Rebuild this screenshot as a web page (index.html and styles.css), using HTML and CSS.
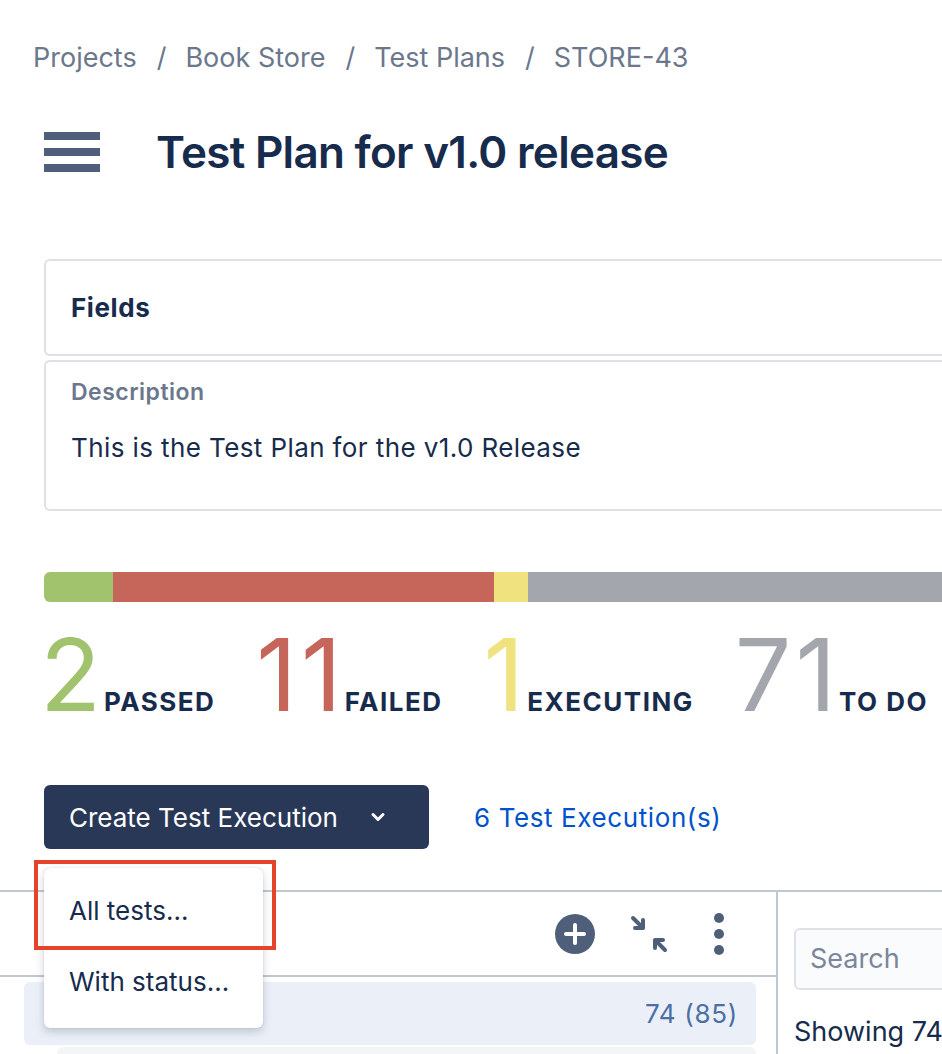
FILE: index.html
```html
<!DOCTYPE html>
<html>
<head>
    <title>Test Plan for v1.0 release</title>
    <link rel="stylesheet" href="styles.css">
</head>
<body>
    <div id="page">
        <div id="breadcrumbs">
            <a href="#">Projects</a><span class="sep">/</span>
            <a href="#">Book Store</a><span class="sep">/</span>
            <a href="#">Test Plans</a><span class="sep">/</span>
            <a href="#">STORE-43</a>
        </div>

        <div id="heading">
            <div class="menu-icon"><span></span><span></span><span></span></div>
            <h1>Test Plan for v1.0 release</h1>
        </div>

        <div class="card card-head">Fields</div>
        <div class="card card-desc">
            <div class="field-label">Description</div>
            <div class="field-value">This is the Test Plan for the v1.0 Release</div>
        </div>

        <div id="progress">
            <div class="seg passed" style="width:69px"></div>
            <div class="seg failed" style="width:381px"></div>
            <div class="seg executing" style="width:34px"></div>
            <div class="seg todo"></div>
        </div>

        <div id="stats">
            <div class="stat"><span class="num passed-c">2</span><span class="lbl">PASSED</span></div>
            <div class="stat"><span class="num failed-c">11</span><span class="lbl">FAILED</span></div>
            <div class="stat"><span class="num executing-c">1</span><span class="lbl">EXECUTING</span></div>
            <div class="stat"><span class="num todo-c">71</span><span class="lbl">TO DO</span></div>
        </div>

        <div id="actions">
            <button class="create-btn">Create Test Execution
                <svg width="20" height="20" viewBox="0 0 20 20"><path d="M5 7.5l5 5 5-5" fill="none" stroke="#fff" stroke-width="3" stroke-linecap="round" stroke-linejoin="round"/></svg>
            </button>
            <a class="exec-link" href="#">6 Test Execution(s)</a>
        </div>
    </div>

    <div id="board">
        <div class="tree-col">
            <div class="tree-toolbar">
                <svg width="42" height="42" viewBox="0 0 42 42"><circle cx="21" cy="21" r="20" fill="#505f79"/><path d="M21 12v18M12 21h18" stroke="#fff" stroke-width="4" stroke-linecap="round"/></svg>
                <svg class="collapse" width="40" height="40" viewBox="0 0 40 40"><g fill="none" stroke="#505f79" stroke-width="4" stroke-linecap="round" stroke-linejoin="round"><path d="M4 4l10 10M14 6v8H6"/><path d="M36 36L26 26M26 34v-8h8"/></g></svg>
                <svg width="10" height="42" viewBox="0 0 10 42"><circle cx="5" cy="5" r="5" fill="#505f79"/><circle cx="5" cy="21" r="5" fill="#505f79"/><circle cx="5" cy="37" r="5" fill="#505f79"/></svg>
            </div>
            <div class="tree-row root">
                <span class="count">74 (85)</span>
            </div>
            <div class="tree-row child"></div>
        </div>
        <div class="list-col">
            <div class="search">Search</div>
            <div class="showing">Showing 74</div>
        </div>

        <div class="dropdown">
            <div class="item selected">All tests...</div>
            <div class="item">With status...</div>
        </div>
    </div>
</body>
</html>
```

FILE: styles.css
```css
html, body{
    margin:0;
    padding:0;
    overflow:hidden;
    background:#fff;
}

body{
    font-family:Inter, "Noto Sans", sans-serif;
    color:#172b4d;
    width:1100px;
}

#page{
    padding:40px 0 0 44px;
}

#breadcrumbs{
    display:flex;
    margin-left:-11px;
    font-size:27px;
    line-height:36px;
    color:#6b778c;
}

#breadcrumbs a{
    color:#6b778c;
    text-decoration:none;
}

#breadcrumbs .sep{
    margin:0 19px 0 20px;
}

#heading{
    display:flex;
    align-items:center;
    height:56px;
    margin-top:48px;
}

.menu-icon{
    display:flex;
    flex-direction:column;
    gap:8px;
    width:56px;
}

.menu-icon span{
    display:block;
    height:8px;
    background:#505f79;
}

#heading h1{
    margin:0 0 0 56px;
    font-size:44px;
    font-weight:600;
    letter-spacing:-0.7px;
}

.card{
    border:2px solid #dfe1e6;
    border-radius:6px;
    border-right:none;
}

.card-head{
    margin-top:79px;
    height:93px;
    line-height:93px;
    padding-left:25px;
    font-size:26px;
    font-weight:700;
    letter-spacing:0.6px;
}

.card-desc{
    margin-top:4px;
    height:147px;
    padding-left:25px;
}

.field-label{
    margin-top:16px;
    font-size:23px;
    font-weight:600;
    letter-spacing:0.5px;
    color:#6b778c;
}

.field-value{
    margin-top:26px;
    font-size:26px;
    letter-spacing:0.4px;
}

#progress{
    display:flex;
    height:30px;
    margin-top:61px;
    border-radius:6px 0 0 6px;
    overflow:hidden;
}

.passed{ background:#a1c36d; }
.failed{ background:#c6655a; }
.executing{ background:#efe27f; }
.todo{ background:#a3a6ad; flex:1; }

.passed-c{ color:#a1c36d; }
.failed-c{ color:#c6655a; }
.executing-c{ color:#efe27f; }
.todo-c{ color:#a3a6ad; }

#stats{
    display:flex;
    align-items:baseline;
    margin:23px 0 0 -4px;
    gap:41px;
}

.stat{
    display:flex;
    align-items:baseline;
}

.num{
    font-size:100px;
    font-weight:400;
    line-height:100px;
    letter-spacing:4px;
}

.lbl{
    margin-left:-1px;
    font-size:26px;
    font-weight:700;
    letter-spacing:1.5px;
}

#actions{
    display:flex;
    align-items:center;
    margin-top:60px;
}

.create-btn{
    display:flex;
    align-items:center;
    gap:30px;
    height:64px;
    width:385px;
    padding:0 25px;
    border:none;
    border-radius:6px;
    background:#2a3858;
    color:#fff;
    font-family:inherit;
    font-size:26px;
}

.exec-link{
    margin-left:45px;
    font-size:26px;
    letter-spacing:0.6px;
    color:#0052cc;
    text-decoration:none;
}

#board{
    position:relative;
    display:flex;
    margin-top:41px;
    border-top:2px solid #c1c7d0;
    height:300px;
}

.tree-col{
    flex-shrink:0;
    width:776px;
    border-right:2px solid #c1c7d0;
}

.tree-toolbar{
    display:flex;
    align-items:center;
    justify-content:flex-end;
    gap:33px;
    height:83px;
    padding-right:52px;
    border-bottom:2px solid #c1c7d0;
}

.tree-toolbar .collapse{
    margin-right:12px;
}

.tree-row{
    border-radius:6px;
}

.tree-row.root{
    margin:5px 20px 0 24px;
    height:63px;
    background:#ebf0f8;
    display:flex;
    align-items:center;
    justify-content:flex-end;
    padding-right:18px;
}

.count{
    font-size:26px;
    letter-spacing:0.7px;
    color:#4a6fa5;
}

.tree-row.child{
    margin:2px 20px 0 57px;
    height:60px;
    background:#f4f5f7;
}

.list-col{
    padding:36px 0 0 16px;
}

.search{
    width:300px;
    height:58px;
    line-height:58px;
    padding-left:14px;
    border:2px solid #dfe1e6;
    border-radius:6px;
    background:#fafbfc;
    color:#7a869a;
    font-size:27px;
}

.showing{
    margin-top:25px;
    font-size:27px;
}

.dropdown{
    position:absolute;
    left:44px;
    top:-24px;
    width:219px;
    height:160px;
    background:#fff;
    border-radius:6px;
    box-shadow:0 4px 10px rgba(9,30,66,0.2), 0 0 1px rgba(9,30,66,0.3);
}

.item{
    height:70px;
    line-height:72px;
    padding-left:25px;
    font-size:26px;
}

.item.selected{
    outline:4px solid #e5432a;
    margin:-4px -9px 0 -6px;
    padding-left:31px;
    height:82px;
    line-height:82px;
    padding-top:6px;
    box-sizing:border-box;
}
```
